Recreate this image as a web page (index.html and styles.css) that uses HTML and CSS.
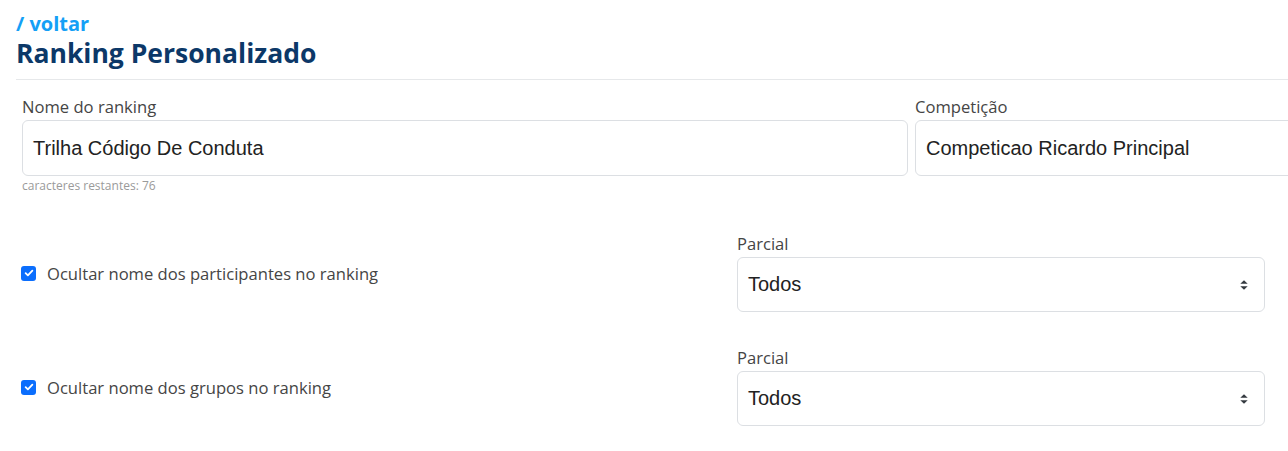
FILE: index.html
```html
<!DOCTYPE html>
<html lang="pt-BR">
<head>
<meta charset="utf-8">
<title>Ranking Personalizado</title>
<link rel="stylesheet" href="styles.css">
</head>
<body>
<main class="page">
  <header class="page-header">
    <a class="back-link" href="#">/ voltar</a>
    <h1 class="title">Ranking Personalizado</h1>
  </header>
  <form class="form">
    <div class="row row-top">
      <div class="field field-name">
        <label class="label">Nome do ranking</label>
        <div class="input">Trilha Código De Conduta</div>
        <small class="hint">caracteres restantes: 76</small>
      </div>
      <div class="field field-comp">
        <label class="label">Competição</label>
        <div class="input">Competicao Ricardo Principal</div>
      </div>
    </div>

    <div class="row row-opt">
      <div class="check-col">
        <label class="check">
          <span class="box"><svg viewBox="0 0 16 16" width="12" height="12"><path d="M3.5 8.2l3 3 6-6.4" fill="none" stroke="#fff" stroke-width="2.4" stroke-linecap="round" stroke-linejoin="round"/></svg></span>
          <span class="check-text">Ocultar nome dos participantes no ranking</span>
        </label>
      </div>
      <div class="field field-sel">
        <label class="label">Parcial</label>
        <div class="select">
          <span>Todos</span>
          <svg class="caret" viewBox="0 0 16 16" width="16" height="16"><path d="M4.3 6.8L8 3.2l3.7 3.6z M4.3 9.2L8 12.8l3.7-3.6z" fill="#343a40"/></svg>
        </div>
      </div>
    </div>

    <div class="row row-opt">
      <div class="check-col">
        <label class="check">
          <span class="box"><svg viewBox="0 0 16 16" width="12" height="12"><path d="M3.5 8.2l3 3 6-6.4" fill="none" stroke="#fff" stroke-width="2.4" stroke-linecap="round" stroke-linejoin="round"/></svg></span>
          <span class="check-text">Ocultar nome dos grupos no ranking</span>
        </label>
      </div>
      <div class="field field-sel">
        <label class="label">Parcial</label>
        <div class="select">
          <span>Todos</span>
          <svg class="caret" viewBox="0 0 16 16" width="16" height="16"><path d="M4.3 6.8L8 3.2l3.7 3.6z M4.3 9.2L8 12.8l3.7-3.6z" fill="#343a40"/></svg>
        </div>
      </div>
    </div>
  </form>
</main>
</body>
</html>
```
FILE: styles.css
```css
* { box-sizing: border-box; }
html, body { margin: 0; padding: 0; background: #fff; overflow: hidden; }
body { font-family: "Open Sans", "Noto Sans", sans-serif; color: #444; }

.page { padding: 11px 0 0 16px; width: 1500px; }

.page-header { border-bottom: 1px solid #e6e8ea; padding-bottom: 9px; }
.back-link { display: block; color: #14a0f6; font-weight: 700; font-size: 20px; line-height: 26px; text-decoration: none; }
.title { margin: 0; color: #0c3868; font-size: 26.5px; font-weight: 700; line-height: 33px; }

.form { padding-left: 6px; }
.row { display: flex; }
.row-top { gap: 7px; padding-top: 17px; }

.field { display: flex; flex-direction: column; }
.field-name { width: 886px; }
.field-comp { width: 500px; }

.label { font-size: 16.6px; line-height: 20px; color: #454545; margin-bottom: 3px; }

.input, .select {
  height: 56px;
  border: 1px solid #dcdfe3;
  border-radius: 6px;
  font-family: "Liberation Sans", Arial, sans-serif;
  font-size: 20px;
  color: #222;
  display: flex;
  align-items: center;
  padding: 0 10px;
}
.select { height: 55px; }
.hint { font-size: 12px; color: #9a9a9a; margin-top: 3px; line-height: 14px; }

.row-opt { align-items: center; }
.row-top + .row-opt { margin-top: 41px; }
.row-opt + .row-opt { margin-top: 36px; }
.check-col { width: 715px; }
.check { display: flex; align-items: center; gap: 11px; font-size: 16.6px; color: #454545; }
.box { width: 15px; height: 15px; border-radius: 3px; background: #0b6efd; display: inline-flex; align-items: center; justify-content: center; margin-left: -1px; }
.field-sel { width: 528px; }
.select { justify-content: space-between; padding-right: 12px; }
.caret { display: block; }
```
